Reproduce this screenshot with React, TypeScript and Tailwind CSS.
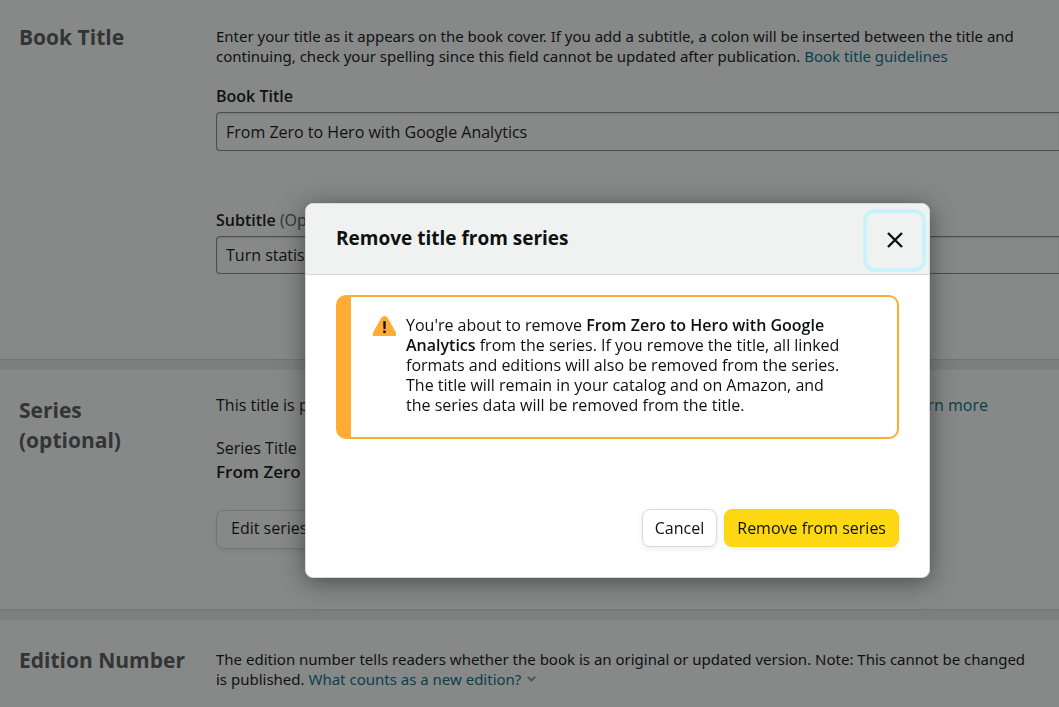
import type { ReactNode } from "react";

function Section({ title, children, className }: { title: ReactNode; children: ReactNode; className: string }) {
  return (
    <section className={`flex border-b border-[#d5d9d9] bg-white pl-[19px] ${className}`}>
      <h2 className="w-[197px] shrink-0 text-[21px] leading-[30px] font-bold text-[#565959]">{title}</h2>
      <div className="min-w-0 flex-1">{children}</div>
    </section>
  );
}

function TitleSection() {
  return (
    <Section title="Book Title" className="h-[360px] pt-[22px]">
      <p className="pt-1 font-['Noto_Sans',sans-serif] text-[15px] whitespace-nowrap">
        Enter your title as it appears on the book cover. If you add a subtitle, a colon will be inserted between the title and
        <br />
        continuing, check your spelling since this field cannot be updated after publication.{" "}
        <a href="#guidelines" className="text-[#007185]">Book title guidelines</a>
      </p>
      <label htmlFor="book-title" className="mt-5 block font-semibold">Book Title</label>
      <input
        id="book-title"
        defaultValue="From Zero to Hero with Google Analytics"
        className="mt-[6px] block h-[39px] w-full rounded-l-[4px] border border-r-0 border-[#888c8c] bg-white pl-[9px] shadow-[inset_0_1px_2px_rgba(15,17,17,0.15)]"
      />
      <label htmlFor="subtitle" className="mt-[59px] block">
        <span className="font-semibold">Subtitle</span> <span className="text-[#565959]">(Optional)</span>
      </label>
      <input
        id="subtitle"
        defaultValue="Turn statistics"
        className="mt-[6px] block h-[38px] w-full rounded-l-[4px] border border-r-0 border-[#888c8c] bg-white pl-[9px] shadow-[inset_0_1px_2px_rgba(15,17,17,0.15)]"
      />
    </Section>
  );
}

function SeriesSection() {
  return (
    <Section title={<>Series<br />(optional)</>} className="h-[240px] pt-[25px]">
      <div className="flex w-[772px] justify-between">
        <p>This title is part</p>
        <a href="#series" className="text-[#007185]">Learn more</a>
      </div>
      <p className="mt-[23px]">Series Title</p>
      <p className="mt-1 text-[17px] font-semibold">From Zero to</p>
      <button
        type="button"
        className="mt-7 h-[39px] rounded-[8px] border border-[#d5d9d9] bg-white px-[14px] pb-1 shadow-[0_2px_5px_rgba(213,217,217,0.5)]"
      >
        Edit series
      </button>
    </Section>
  );
}

function EditionSection() {
  return (
    <Section title="Edition Number" className="h-[120px] pt-[25px]">
      <p className="pt-1 font-['Noto_Sans',sans-serif] text-[15px] whitespace-nowrap">
        The edition number tells readers whether the book is an original or updated version. Note: This cannot be changed
        <br />
        is published.{" "}
        <a href="#edition" className="inline-flex items-center gap-[6px] text-[#007185]">
          What counts as a new edition?
          <svg width="9" height="6" viewBox="0 0 9 6" fill="none" stroke="#888c8c" strokeWidth="1.8">
            <path d="M.8.8l3.7 3.7L8.200.8" />
          </svg>
        </a>
      </p>
    </Section>
  );
}

function RemoveDialog() {
  return (
    <div
      role="dialog"
      aria-modal="true"
      aria-labelledby="dialog-title"
      className="w-[625px] shrink-0 overflow-hidden rounded-[8px] border border-[#d5d9d9] bg-white shadow-[0_4px_24px_rgba(15,17,17,0.5)]"
    >
      <header className="flex h-[71px] items-center justify-between border-b border-[#d5d9d9] bg-[#f0f2f2] pr-[7px] pb-[2px] pl-[30px]">
        <h1 id="dialog-title" className="text-[19px] leading-6 font-bold">Remove title from series</h1>
        <button
          type="button"
          aria-label="Close"
          className="mt-1 flex size-[55px] items-center justify-center rounded-[8px] shadow-[0_0_0_4px_#c8f3fa]"
        >
          <svg width="16" height="16" viewBox="0 0 16 16" fill="none" stroke="#0f1111" strokeWidth="2.4">
            <path d="M1 1l14 14M15 1L1 15" />
          </svg>
        </button>
      </header>
      <div className="px-[30px] pt-5 pb-[30px]">
        <div role="alert" className="flex rounded-[10px] border-2 border-l-[15px] border-[#ffac35] pt-[18px] pb-[22px] pl-[22px]">
          <svg width="23" height="20" viewBox="0 0 23 20" className="mt-[1px] shrink-0">
            <path d="M8.500 1.500Q9.500 0 11.500 0t3 1.500L23 16.500V20H0v-3.500z" fill="#ffac35" />
            <path d="M10.200 5.200h2.600l-.3 7.800h-2z" fill="#0f1111" />
            <path d="M10.300 14.500h2.400v2.600h-2.400z" fill="#0f1111" />
          </svg>
          <p className="ml-[10px] whitespace-nowrap">
            You're about to remove <b className="font-semibold">From Zero to Hero with Google<br />
            Analytics</b> from the series. If you remove the title, all linked<br />
            formats and editions will also be removed from the series.<br />
            The title will remain in your catalog and on Amazon, and<br />
            the series data will be removed from the title.
          </p>
        </div>
        <div className="mt-[70px] flex justify-end gap-[7px]">
          <button
            type="button"
            className="h-[38px] rounded-[8px] border border-[#d5d9d9] bg-white px-3 shadow-[0_2px_5px_rgba(213,217,217,0.5)]"
          >
            Cancel
          </button>
          <button
            type="button"
            className="h-[38px] rounded-[8px] border border-[#fcd200] bg-[#ffd814] px-3 shadow-[0_2px_5px_rgba(213,217,217,0.5)]"
          >
            Remove from series
          </button>
        </div>
      </div>
    </div>
  );
}

export default function App() {
  return (
    <div className="h-screen overflow-hidden bg-[#eaeded] font-['Open_Sans','Noto_Sans',sans-serif] text-[16px] leading-5 text-[#0f1111]">
      <main className="flex flex-col gap-[10px]">
        <TitleSection />
        <SeriesSection />
        <EditionSection />
      </main>
      <div className="fixed inset-0 flex items-start overflow-hidden bg-[#0f1111]/50 pt-[203px] pl-[305px]">
        <RemoveDialog />
      </div>
    </div>
  );
}
